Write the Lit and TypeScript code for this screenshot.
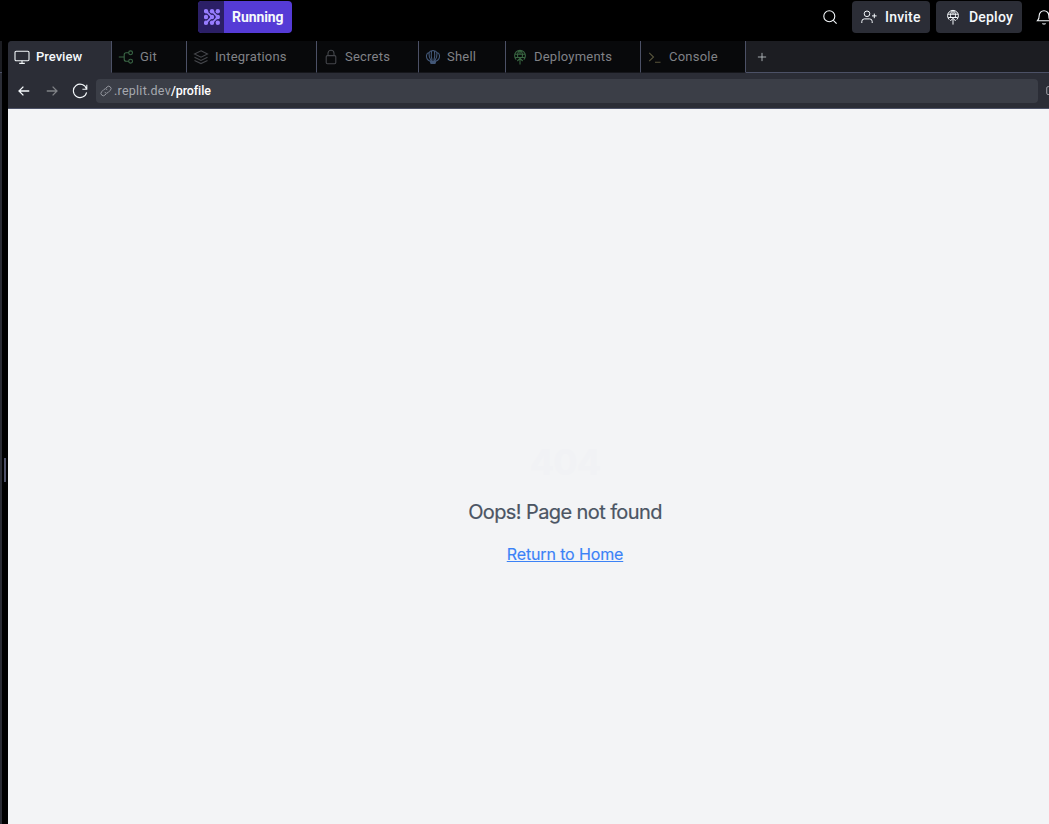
import { LitElement, html, css, svg } from "lit";
import { customElement } from "lit/decorators.js";

const balloon = svg`<path d="M4.200 10.600a5.400 5.400 0 1 1 7.600 0M5.800 8.800C4.900 5.500 6 2.200 8 1.400c2 .8 3.100 4.100 2.200 7.400M2.700 5.200h10.600M3.300 8.500h9.400M8 15.600V9.400M5.300 12 8 9.300l2.700 2.700M8 1.400v4"/>`;
const icons: Record<string, unknown> = {
  preview: svg`<rect x="1" y="2.2" width="14" height="9.6" rx="1.2"/><path d="M8 11.8v2.6M5.2 14.4h5.6"/>`,
  git: svg`<circle cx="12.6" cy="3.8" r="1.9"/><circle cx="12.6" cy="12.2" r="1.9"/><path d="M.8 8h5.4M10.7 3.8H8.2a2 2 0 0 0-2 2v4.4a2 2 0 0 0 2 2h2.5"/>`,
  layers: svg`<path d="M8 1.800 14.500 5 8 8.200 1.500 5ZM1.500 8.200 8 11.400l6.500-3.200M1.500 11.400 8 14.600l6.500-3.200"/>`,
  lock: svg`<rect x="3.200" y="6.600" width="9.600" height="8.200" rx="1.200"/><path d="M5 6.600V4.300a3 3 0 0 1 6 0v2.300"/>`,
  shell: svg`<path d="M5.200 12.2C2 11 1.200 8.500 1.500 6.300 2 4 3.500 3.700 4 3.800 4.700 2 6 1.600 8 1.500c2 .1 3.300.5 4 2.300.5-.1 2 .2 2.500 2.500.3 2.200-.5 4.700-3.700 5.900L10 14.400H6ZM6.200 12C4.800 10 3.800 7 4 4M7.200 12C6 8 6 5 6.500 2M9.800 12c1.400-2 2.400-5 2.200-8M8.800 12c1.200-4 1.200-7 .7-10M5.500 12.600h5M6 13.500h4"/>`,
  deploy: balloon,
  console: svg`<path d="m2.200 3.800 4.300 4.200-4.300 4.200M8 13.300h5.500"/>`,
  search: svg`<circle cx="7.300" cy="7.300" r="5.500"/><path d="m11.300 11.300 3.300 3.300"/>`,
  invite: svg`<circle cx="6" cy="4.800" r="2.800"/><path d="M.8 14v-1.500a2.600 2.600 0 0 1 2.600-2.600h5.200a2.600 2.600 0 0 1 2.600 2.600V14M13.300 4.600v4.600M11 6.900h4.600"/>`,
  bell: svg`<path d="M1.500 11.700c1.500-1.500 1.700-3 1.700-5.200a4.800 4.800 0 0 1 9.600 0c0 2.200.2 3.700 1.700 5.200ZM6.500 14.300c.8 1 2.200 1 3 0"/>`,
  back: svg`<path d="M14 8H2.500M7.300 3 2.300 8l5 5"/>`,
  forward: svg`<path d="M2 8h11.500M8.700 3l5 5-5 5"/>`,
  reload: svg`<path d="M14.800 1.800v4.400h-4.400M14.500 6A6.700 6.700 0 1 0 14.600 9.300"/>`,
  link: svg`<path d="M6.300 9.700a3 3 0 0 0 4.500.3l3-3a3.100 3.100 0 0 0-4.400-4.400L8 4M9.700 6.300a3 3 0 0 0-4.500-.3l-3 3a3.100 3.100 0 0 0 4.400 4.400L8 12"/>`,
  plus: svg`<path d="M8 2.500v11M2.500 8h11"/>`,
  open: svg`<path d="M10 3H3.500A1.500 1.500 0 0 0 2 4.500v6A1.500 1.500 0 0 0 3.500 12H12"/>`,
  running: svg`<g fill="currentColor" stroke="none"><circle cx="2" cy="2.200" r="2.200"/><circle cx="8" cy="2.200" r="2.200"/><circle cx="13.800" cy="2.200" r="2.200"/><circle cx="2" cy="8" r="2.200"/><circle cx="8" cy="8" r="2.200"/><circle cx="13.800" cy="8" r="2.200"/><circle cx="2" cy="13.800" r="2.200"/><circle cx="8" cy="13.800" r="2.200"/><circle cx="13.800" cy="13.800" r="2.200"/></g><path d="m2 2.200 6 5.800-6 5.800M8 2.200 13.800 8 8 13.800" stroke-width="1.800"/>`,
};
const icon = (name: string, size = 16) =>
  html`<svg class="icon ${name}" width=${size} height=${size} viewBox="0 0 16 16">${icons[name]}</svg>`;

const tabs = [
  ["preview", "Preview"],
  ["git", "Git"],
  ["layers", "Integrations"],
  ["lock", "Secrets"],
  ["shell", "Shell"],
  ["deploy", "Deployments"],
  ["console", "Console"],
];

@customElement("app-root")
export class AppRoot extends LitElement {
  static styles = css`
    :host {
      display: flex;
      flex-direction: column;
      height: 100vh;
      overflow: hidden;
      background: #000;
      color: #f5f9fc;
      font: 500 14px/20px Roboto, sans-serif;
    }
    * { box-sizing: border-box; }
    .icon { flex: none; display: block; fill: none; stroke: currentColor; stroke-width: 1.1; }
    header { height: 41px; flex: none; display: flex; align-items: flex-start; padding: 1px 0 0 198px; width: 1052px; }
    .run { display: flex; width: 94px; height: 32px; border-radius: 4px; overflow: hidden; background: #553bd6; }
    .mark { width: 26px; display: grid; place-items: center; padding-left: 2px; background: #2b1f66; color: #977dff; }
    .run b { padding: 6px 0 0 8px; font-weight: 700; letter-spacing: -.08px; white-space: nowrap; }
    .actions { margin-left: auto; display: flex; align-items: center; height: 32px; }
    .find { margin-right: 14px; }
    .btn { height: 32px; display: flex; align-items: center; background: #2b2d36; border-radius: 4px; padding-left: 9px; gap: 8px; letter-spacing: .2px; }
    .btn .icon { stroke-width: 1; }
    .invite-btn { width: 78px; margin-right: 6px; }
    .deploy-btn { width: 86px; margin-right: 14px; }
    .work { flex: 1; min-height: 0; display: flex; }
    .side { width: 2px; background: #2b2d36; }
    .side i { display: block; height: 32px; background: #1c1d22; border-bottom: 1px solid #4c5166; }
    .divider { width: 6px; display: flex; padding: 417px 0 0 2px; }
    .divider i { width: 2px; height: 24px; background: #4e5168; }
    .pane { flex: 1; min-width: 0; display: flex; flex-direction: column; }
    .tabs { height: 32px; display: flex; flex: none; background: #1c1d22; border-radius: 4px 0 0 0; overflow: hidden; }
    .tab { flex: none; display: flex; align-items: center; padding-left: 6px; gap: 6px; font-size: 13px; font-weight: 400; color: #808287; background: #08090b; border-right: 1px solid #4c5166; letter-spacing: .22px; border-bottom: 1px solid #15161b; white-space: nowrap; }
    .tab.preview-tab { width: 104px; background: #2b2d36; color: #f5f9fc; font-weight: 500; border-bottom-color: #2b2d36; letter-spacing: 0; }
    .git-tab { width: 75px; }
    .layers-tab { width: 130px; }
    .lock-tab { width: 102px; }
    .shell-tab { width: 87px; }
    .deploy-tab { width: 135px; }
    .console-tab { width: 105px; }
    .tab .git { color: #3b6847; }
    .tab .layers, .tab .lock { color: #44464b; }
    .tab .shell { color: #425777; }
    .tab .deploy { color: #386541; }
    .tab .console { color: #59563d; }
    .add { flex: 1; padding: 10px 0 0 10px; border-bottom: 1px solid #4c5166; color: #c2c8cc; }
    .nav { height: 36px; flex: none; display: flex; align-items: center; background: #2b2d36; border-bottom: 1px solid #4c5166; padding-left: 9px; }
    .nav .icon { margin-right: 14px; }
    .nav .back, .nav .forward { stroke-width: 1.5; }
    .nav .forward { color: #808287; margin-right: 13px; }
    .nav > .reload { margin-right: 8px; }
    .url { width: 942px; height: 24px; flex: none; display: flex; align-items: center; padding-left: 4px; border-radius: 4px; background: #3b3e47; font-size: 12.5px; color: #a5a8af; font-weight: 400; letter-spacing: .25px; }
    .nav .url .icon { margin-right: 2px; }
    .url b { color: #fff; font-weight: 500; letter-spacing: -.1px; }
    .nav > .open { margin: 0 0 0 7px; color: #a5a8af; }
    main { flex: 1; background: #f3f4f6; display: flex; flex-direction: column; align-items: center; padding: 333px 0 0 73px; font-family: Inter, sans-serif; text-align: center; }
    h1 { margin: 0 0 16px; font: 700 36px/40px Inter, sans-serif; color: #f1f2f5; letter-spacing: -.9px; }
    p { margin: 0 0 16px; font: 400 20px/28px Inter, sans-serif; color: #4b5563; letter-spacing: -.6px; -webkit-text-stroke: .2px #4b5563; }
    a { font: 400 16px/24px Inter, sans-serif; color: #3b82f6; text-decoration: underline; letter-spacing: -.13px; -webkit-text-stroke: .15px #3b82f6; }
  `;

  render() {
    return html`
      <header>
        <div class="run"><span class="mark">${icon("running")}</span><b>Running</b></div>
        <div class="actions">
          <span class="find">${icon("search")}</span>
          <span class="btn invite-btn">${icon("invite")}<span>Invite</span></span>
          <span class="btn deploy-btn">${icon("deploy")}<span>Deploy</span></span>
          ${icon("bell")}
        </div>
      </header>
      <div class="work">
        <div class="side"><i></i></div>
        <div class="divider"><i></i></div>
        <section class="pane">
          <div class="tabs">
            ${tabs.map(([name, label]) => html`<div class="tab ${name}-tab">${icon(name)}<span>${label}</span></div>`)}
            <div class="add">${icon("plus", 12)}</div>
          </div>
          <div class="nav">
            ${icon("back", 14)}${icon("forward", 14)}${icon("reload")}
            <div class="url">${icon("link", 12)}<span>.replit.dev<b>/profile</b></span></div>
            ${icon("open", 14)}
          </div>
          <main><h1>404</h1><p>Oops! Page not found</p><a href="#">Return to Home</a></main>
        </section>
      </div>
    `;
  }
}
